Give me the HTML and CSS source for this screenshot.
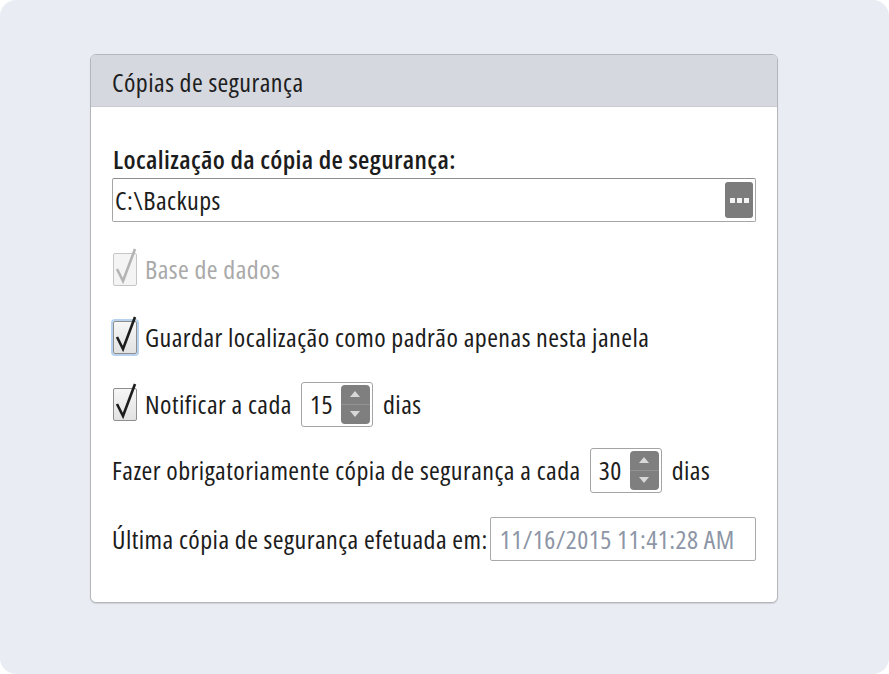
FILE: index.html
```html
<!DOCTYPE html>
<html>
<head>
<meta charset="utf-8">
<link rel="stylesheet" href="styles.css">
</head>
<body>
<div class="frame">
  <section class="panel">
    <header class="panel-head">Cópias de segurança</header>
    <div class="panel-body">
      <div class="label-bold">Localização da cópia de segurança:</div>
      <div class="path-input">
        <span class="path-text">C:\Backups</span>
        <span class="browse-btn"><i></i><i></i><i></i></span>
      </div>

      <div class="row row-base">
        <span class="check disabled">
          <svg viewBox="0 0 26 38" width="26" height="38"><path d="M4 21 L10 33 L22 1" fill="none" stroke="currentColor" stroke-width="2.6" stroke-linejoin="miter"/></svg>
        </span>
        <span class="txt muted">Base de dados</span>
      </div>

      <div class="row row-guardar">
        <span class="check focused">
          <svg viewBox="0 0 26 38" width="26" height="38"><path d="M4 21 L10 33 L22 1" fill="none" stroke="currentColor" stroke-width="2.6" stroke-linejoin="miter"/></svg>
        </span>
        <span class="txt">Guardar localização como padrão apenas nesta janela</span>
      </div>

      <div class="row row-notif">
        <span class="check">
          <svg viewBox="0 0 26 38" width="26" height="38"><path d="M4 21 L10 33 L22 1" fill="none" stroke="currentColor" stroke-width="2.6" stroke-linejoin="miter"/></svg>
        </span>
        <span class="txt">Notificar a cada</span>
        <span class="spinner">
          <span class="spin-val">15</span>
          <span class="spin-btn"><span class="up"></span><span class="down"></span></span>
        </span>
        <span class="txt">dias</span>
      </div>

      <div class="row row-fazer">
        <span class="txt">Fazer obrigatoriamente cópia de segurança a cada</span>
        <span class="spinner">
          <span class="spin-val">30</span>
          <span class="spin-btn"><span class="up"></span><span class="down"></span></span>
        </span>
        <span class="txt">dias</span>
      </div>

      <div class="row row-ultima">
        <span class="txt">Última cópia de segurança efetuada em:</span>
        <span class="date-box">11/16/2015 11:41:28 AM</span>
      </div>
    </div>
  </section>
</div>
</body>
</html>
```
FILE: styles.css
```css
html, body {
  margin: 0;
  padding: 0;
  background: #ffffff;
}
body {
  font-family: "Open Sans", "Noto Sans", sans-serif;
  font-stretch: 75%;
  font-size: 26px;
  letter-spacing: 0.45px;
  color: #1c1c1c;
}
.frame {
  width: 889px;
  height: 674px;
  box-sizing: border-box;
  background: #e9ecf3;
  border-radius: 16px;
  padding: 54px 0 0 90px;
}
.panel {
  width: 688px;
  height: 549px;
  box-sizing: border-box;
  border: 1px solid #b4b6ba;
  border-radius: 6px;
  background: #ffffff;
  overflow: hidden;
  box-shadow: 0 1px 1px rgba(0,0,0,0.12);
}
.panel-head {
  height: 52px;
  box-sizing: border-box;
  background: #d5d8df;
  border-bottom: 1px solid #c9ccd3;
  padding-left: 21px;
  font-size: 26px;
  line-height: 54px;
  color: #1e1e1e;
}
.panel-body {
  padding: 37px 21px 0 21px;
}
.label-bold {
  font-weight: 600;
  letter-spacing: 0.4px;
  line-height: 30px;
  height: 30px;
  padding-left: 1px;
}
.path-input {
  margin-top: 4px;
  height: 44px;
  box-sizing: border-box;
  border: 1px solid #a6a6a6;
  border-top-color: #8e8e8e;
  border-radius: 2px;
  display: flex;
  align-items: center;
  justify-content: space-between;
  padding: 0 2px 0 2px;
  background: #fff;
}
.path-text {
  line-height: 40px;
}
.browse-btn {
  width: 28px;
  height: 36px;
  border-radius: 3px;
  background: #7c7c7c;
  display: flex;
  align-items: center;
  justify-content: center;
  gap: 2px;
}
.browse-btn i {
  width: 5px;
  height: 5px;
  background: #f4f4f4;
  display: block;
}
.row {
  display: flex;
  align-items: center;
  white-space: nowrap;
}
.row-base { margin-top: 27px; height: 40px; }
.row-guardar { margin-top: 28px; height: 40px; }
.row-notif { margin-top: 24px; height: 46px; }
.row-fazer { margin-top: 20px; height: 46px; }
.row-ultima { margin-top: 24px; height: 44px; }

.check {
  position: relative;
  width: 24px;
  height: 33px;
  box-sizing: border-box;
  border: 1px solid #8e8e8e;
  border-radius: 2px;
  background: linear-gradient(#f6f6f6, #e2e2e2);
  margin-right: 8px;
  margin-left: 1px;
  color: #1d1d1d;
  flex: none;
}
.check svg {
  position: absolute;
  left: -1px;
  top: -6px;
}
.check.disabled {
  border-color: #c6c6c6;
  background: #f4f4f4;
  color: #b4b4b4;
}
.check.focused {
  box-shadow: 0 0 0 2px #b7d2ef;
}
.txt {
  line-height: 34px;
}
.muted {
  color: #a9a9a9;
}
.spinner {
  display: flex;
  align-items: center;
  justify-content: space-between;
  width: 72px;
  height: 45px;
  box-sizing: border-box;
  border: 1px solid #a4a4a4;
  border-radius: 3px;
  background: #fff;
  padding: 0 2px 0 8px;
  margin: 0 10px 0 9px;
}
.spin-val {
  line-height: 34px;
}
.spin-btn {
  width: 29px;
  height: 39px;
  border-radius: 4px;
  background: #7f7f7f;
  display: flex;
  flex-direction: column;
}
.spin-btn .up, .spin-btn .down {
  flex: 1;
  position: relative;
}
.spin-btn .up {
  border-bottom: 1px solid #939393;
}
.spin-btn .up::after, .spin-btn .down::after {
  content: "";
  position: absolute;
  left: 50%;
  top: 50%;
  transform: translate(-50%, -50%);
  width: 0;
  height: 0;
  border-left: 5px solid transparent;
  border-right: 5px solid transparent;
}
.spin-btn .up::after {
  border-bottom: 6px solid #d8d8d8;
}
.spin-btn .down::after {
  border-top: 6px solid #d8d8d8;
}
.row-ultima .txt {
  margin-right: 2px;
}
.date-box {
  width: 266px;
  height: 44px;
  box-sizing: border-box;
  border: 1px solid #a9a9a9;
  border-radius: 2px;
  padding-left: 9px;
  line-height: 42px;
  color: #8d96a6;
}
```
